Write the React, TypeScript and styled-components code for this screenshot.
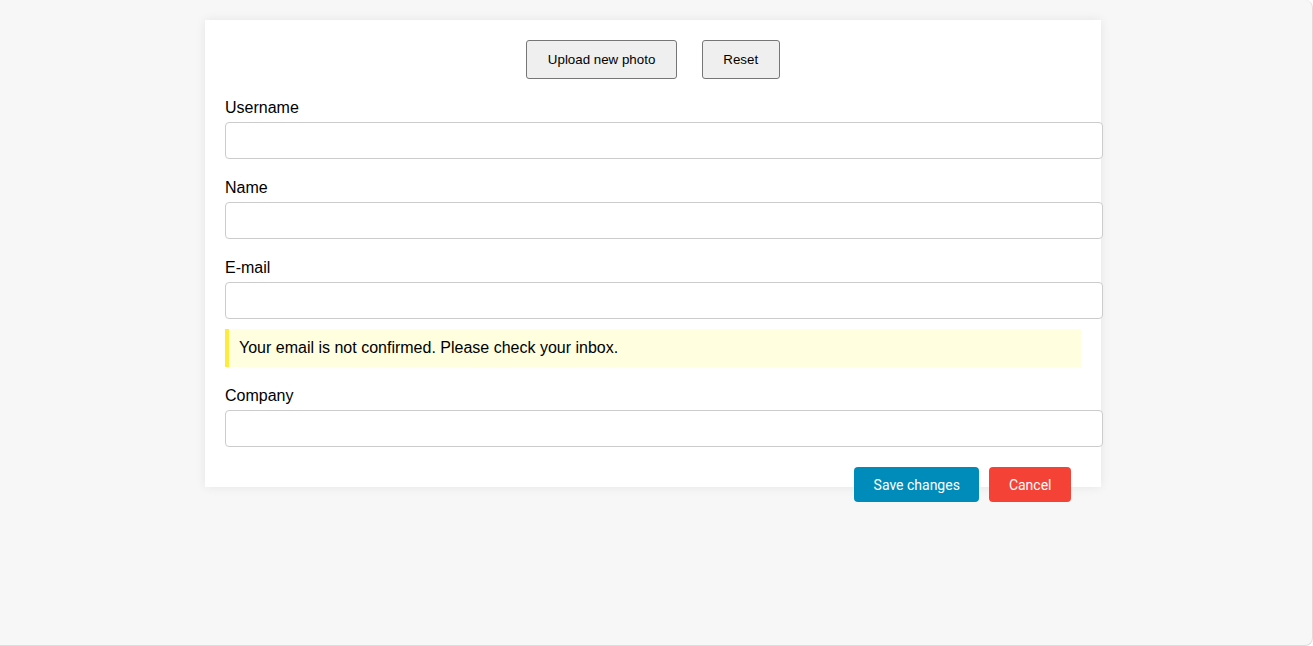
import React from "react";
import styled, { createGlobalStyle } from "styled-components";

const Global = createGlobalStyle`
  html, body { margin: 0; padding: 0; }
  body {
    font-family: "Liberation Sans", Arial, sans-serif;
    color: #000;
    background: #ffffff;
  }
  * { box-sizing: border-box; }
`;

const Page = styled.div`
  width: 1313px;
  height: 646px;
  background: #f7f7f7;
  border-right: 1px solid #dcdcdc;
  border-bottom: 1px solid #dcdcdc;
  border-top-right-radius: 8px;
  border-bottom-right-radius: 8px;
  padding-top: 20px;
  padding-left: 205px;
`;

const Card = styled.div`
  width: 896px;
  background: #ffffff;
  box-shadow: 0 0 10px rgba(0, 0, 0, 0.08);
  padding: 20px;
`;

const PhotoRow = styled.div`
  display: flex;
  justify-content: center;
  gap: 25px;
  margin-bottom: 20px;
`;

const PlainButton = styled.button`
  height: 39px;
  padding: 0 20.5px;
  background: #efefef;
  border: 1px solid #767676;
  border-radius: 3px;
  font-family: "Liberation Sans", Arial, sans-serif;
  font-size: 13.333px;
  color: #000;
`;

const Field = styled.div`
  margin-bottom: 20px;
`;

const Label = styled.label`
  display: block;
  font-size: 16px;
  line-height: 18px;
  margin-bottom: 5px;
`;

const Input = styled.input`
  display: block;
  width: calc(100% + 22px);
  height: 37px;
  padding: 0 10px;
  border: 1px solid #cccccc;
  border-radius: 4px;
  font-family: "Liberation Sans", Arial, sans-serif;
  font-size: 16px;
  background: #fff;
`;

const EmailField = styled(Field)`
  margin-bottom: 10px;
`;

const Notice = styled.div`
  background: #ffffe0;
  border-left: 4px solid #ffeb3b;
  padding: 10px;
  font-size: 16px;
  line-height: 18px;
  margin-bottom: 20px;
`;

const Actions = styled.div`
  display: flex;
  justify-content: flex-end;
  align-items: flex-start;
  gap: 10px;
  height: 0;
  padding-right: 10px;
`;

const ActionButton = styled.button<{ $tone: "primary" | "danger" }>`
  flex: none;
  height: 35px;
  padding: 0 19.5px;
  border: none;
  border-radius: 4px;
  color: #fff;
  font-family: Roboto, "Liberation Sans", Arial, sans-serif;
  font-size: 14px;
  background: ${(p) => (p.$tone === "primary" ? "#008cba" : "#f44336")};
`;

export default function App() {
  return (
    <>
      <Global />
      <Page>
        <Card>
          <PhotoRow>
            <PlainButton>Upload new photo</PlainButton>
            <PlainButton>Reset</PlainButton>
          </PhotoRow>
          <Field>
            <Label>Username</Label>
            <Input type="text" />
          </Field>
          <Field>
            <Label>Name</Label>
            <Input type="text" />
          </Field>
          <EmailField>
            <Label>E-mail</Label>
            <Input type="email" />
          </EmailField>
          <Notice>Your email is not confirmed. Please check your inbox.</Notice>
          <Field>
            <Label>Company</Label>
            <Input type="text" />
          </Field>
          <Actions>
            <ActionButton $tone="primary">Save changes</ActionButton>
            <ActionButton $tone="danger">Cancel</ActionButton>
          </Actions>
        </Card>
      </Page>
    </>
  );
}
